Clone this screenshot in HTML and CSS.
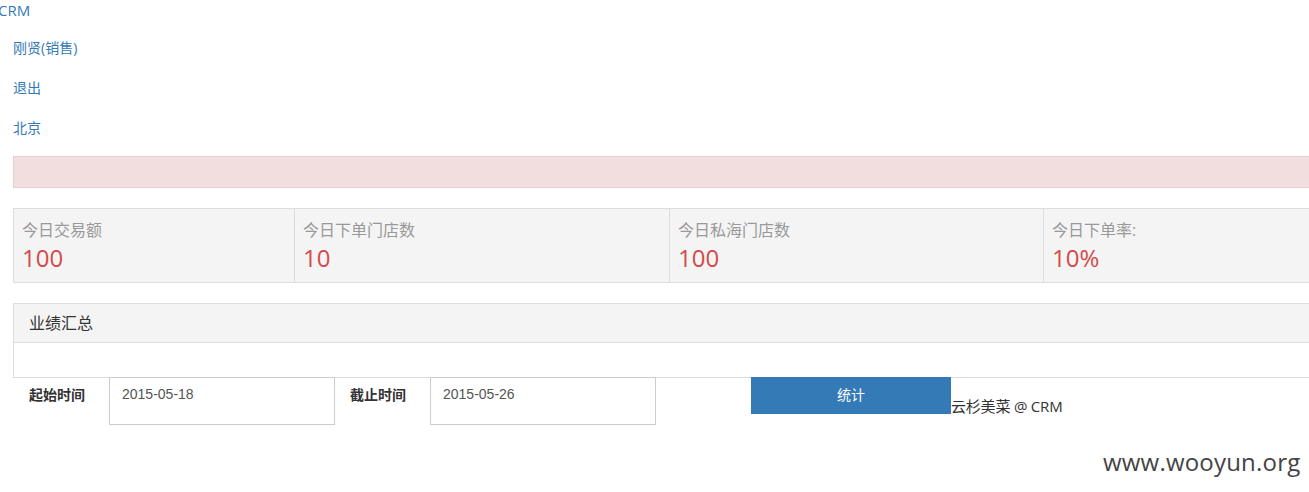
FILE: index.html
```html
<!DOCTYPE html>
<html lang="zh-CN">
<head>
<meta charset="utf-8">
<title>CRM</title>
<link rel="stylesheet" href="styles.css">
</head>
<body>
<div class="brand">CRM</div>
<ul class="nav">
  <li><a href="#">刚贤(销售)</a></li>
  <li><a href="#">退出</a></li>
  <li><a href="#">北京</a></li>
</ul>
<div class="main">
  <div class="alert"></div>
  <div class="stats">
    <div class="stat s1"><div class="label">今日交易额</div><div class="value">100</div></div>
    <div class="stat s2"><div class="label">今日下单门店数</div><div class="value">10</div></div>
    <div class="stat s3"><div class="label">今日私海门店数</div><div class="value">100</div></div>
    <div class="stat s4"><div class="label">今日下单率:</div><div class="value">10%</div></div>
  </div>
  <div class="panel">
    <div class="panel-heading">业绩汇总</div>
    <div class="panel-body"></div>
  </div>
</div>
<form class="filter">
  <label class="flabel">起始时间</label>
  <div class="finput">2015-05-18</div>
  <label class="flabel second">截止时间</label>
  <div class="finput">2015-05-26</div>
  <button type="button" class="btn">统计</button>
  <span class="footer">云杉美菜 @ CRM</span>
</form>
<div class="watermark">www.wooyun.org</div>
</body>
</html>
```

FILE: styles.css
```css
html, body {
  margin: 0;
  padding: 0;
  overflow: hidden;
}
body {
  font-family: "Open Sans", "Noto Sans CJK SC", sans-serif;
  font-size: 13px;
  color: #333;
  background: #fff;
  position: relative;
  height: 492px;
}
a {
  color: #337ab7;
  text-decoration: none;
}
.brand {
  color: #337ab7;
  font-size: 15px;
  line-height: 20px;
  margin-left: -2px;
}
.nav {
  list-style: none;
  margin: 8px 0 0 0;
  padding: 0 0 0 13px;
}
.nav li {
  height: 40px;
  line-height: 40px;
  font-size: 14px;
}
.main {
  margin: 8px -20px 0 13px;
}
.alert {
  height: 30px;
  background: #f2dede;
  border: 1px solid #ebccd1;
}
.stats {
  margin-top: 20px;
  display: flex;
  border: 1px solid #ddd;
  background: #f4f4f4;
  height: 73px;
}
.stat {
  padding: 9px 0 0 8px;
  border-left: 1px solid #ddd;
}
.stat.s1 { border-left: none; width: 272px; }
.stat.s2 { width: 366px; }
.stat.s3 { width: 365px; }
.stat.s4 { flex: 1; }
.label {
  color: #999;
  font-size: 16px;
  line-height: 24px;
}
.value {
  color: #d4494a;
  font-size: 24px;
  line-height: 30px;
  margin-top: 1px;
}
.panel {
  margin-top: 20px;
  border: 1px solid #ddd;
}
.panel-heading {
  height: 38px;
  line-height: 38px;
  padding-left: 15px;
  background: #f4f4f4;
  border-bottom: 1px solid #ddd;
  font-size: 16px;
  color: #333;
}
.panel-body {
  height: 34px;
}
.filter {
  display: flex;
  align-items: flex-start;
  margin: -1px 0 0 13px;
}
.flabel {
  font-weight: bold;
  font-size: 14px;
  line-height: 36px;
  padding: 0 16px 0 16px;
  width: 64px;
}
.flabel.second {
  padding-left: 15px;
}
.finput {
  box-sizing: border-box;
  width: 226px;
  height: 48px;
  border: 1px solid #ccc;
  padding: 6px 12px;
  color: #555;
  font-family: "Liberation Sans", sans-serif;
  font-size: 14px;
  line-height: 20px;
}
.btn {
  margin-left: 95px;
  width: 200px;
  height: 37px;
  border: none;
  background: #337ab7;
  color: #fff;
  font-family: "Noto Sans CJK SC", sans-serif;
  font-size: 14px;
  padding: 0 0 3px 0;
}
.footer {
  margin-top: 19px;
  font-size: 15px;
  line-height: 20px;
  color: #333;
  letter-spacing: -0.2px;
}
.watermark {
  position: absolute;
  left: 1103px;
  top: 445px;
  font-family: "Open Sans", sans-serif;
  font-size: 24px;
  color: #444;
  line-height: 34px;
  letter-spacing: 0.2px;
}
```
